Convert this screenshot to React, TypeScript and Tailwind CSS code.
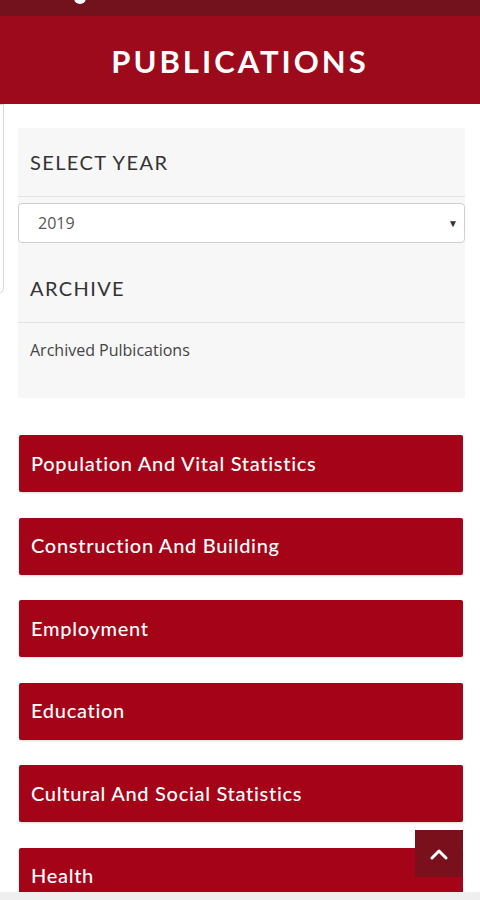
import React from "react";

const cats = [
  "Population And Vital Statistics",
  "Construction And Building",
  "Employment",
  "Education",
  "Cultural And Social Statistics",
  "Health",
];

export default function App() {
  return (
    <div className="relative w-[480px] h-[900px] overflow-hidden bg-white" style={{ fontFamily: "'Open Sans', sans-serif" }}>
      <div className="h-[16px] bg-[#73111d] relative">
        <div className="absolute left-[74px] top-[-6px] w-[12px] h-[10px] rounded-b-full bg-white" />
      </div>
      <div className="h-[88px] bg-[#9c0a1b] flex items-center justify-center">
        <h1 className="text-white text-[31px] font-bold tracking-[3px] pt-[2px]" style={{ fontFamily: "Lato, sans-serif" }}>
          PUBLICATIONS
        </h1>
      </div>
      <div className="absolute left-[-10px] top-[104px] w-[14px] h-[190px] border border-[#d9d9d9] rounded-br-[6px] bg-white" />
      <div className="pt-[24px] px-[18px] pr-[15px]">
        <div className="bg-[#f7f7f7] h-[270px]">
          <div className="h-[69px] flex items-center px-[12px] border-b border-[#e3e3e3]">
            <span className="text-[20px] text-[#333] tracking-[1.4px]" style={{ fontFamily: "Lato, sans-serif" }}>SELECT YEAR</span>
          </div>
          <div className="pt-[6px]">
            <div className="h-[40px] bg-white border border-[#cfcfcf] rounded-[4px] flex items-center justify-between pl-[19px] pr-[6px]">
              <span className="text-[16px] text-[#555]">2019</span>
              <span className="text-[10px] text-[#333]">▼</span>
            </div>
          </div>
          <div className="h-[80px] flex items-end pb-[19px] px-[12px] border-b border-[#e3e3e3]">
            <span className="text-[20px] text-[#333] tracking-[1.4px]" style={{ fontFamily: "Lato, sans-serif" }}>ARCHIVE</span>
          </div>
          <div className="px-[12px] pt-[15px]">
            <span className="text-[16px] text-[#444]">Archived Pulbications</span>
          </div>
        </div>
      </div>
      <div className="mt-[37px] pl-[19px] pr-[17px] flex flex-col gap-[25.6px]">
        {cats.map((c) => (
          <div key={c} className="h-[57px] bg-[#a50418] rounded-[2px] flex items-center px-[12px] pb-[2px] shadow-[0_1px_2px_rgba(0,0,0,0.15)]">
            <span className="text-white text-[20px] font-medium tracking-[0.7px]" style={{ fontFamily: "Lato, sans-serif" }}>{c}</span>
          </div>
        ))}
      </div>
      <div className="absolute left-[415px] top-[830px] w-[48px] h-[47px] bg-[#7a101c] flex items-center justify-center">
        <svg width="18" height="12" viewBox="0 0 18 12" fill="none">
          <path d="M2 10 L9 3 L16 10" stroke="white" strokeWidth="3" strokeLinecap="round" strokeLinejoin="round" />
        </svg>
      </div>
      <div className="absolute left-0 bottom-0 w-full h-[8px] bg-[#efefef]" />
    </div>
  );
}
